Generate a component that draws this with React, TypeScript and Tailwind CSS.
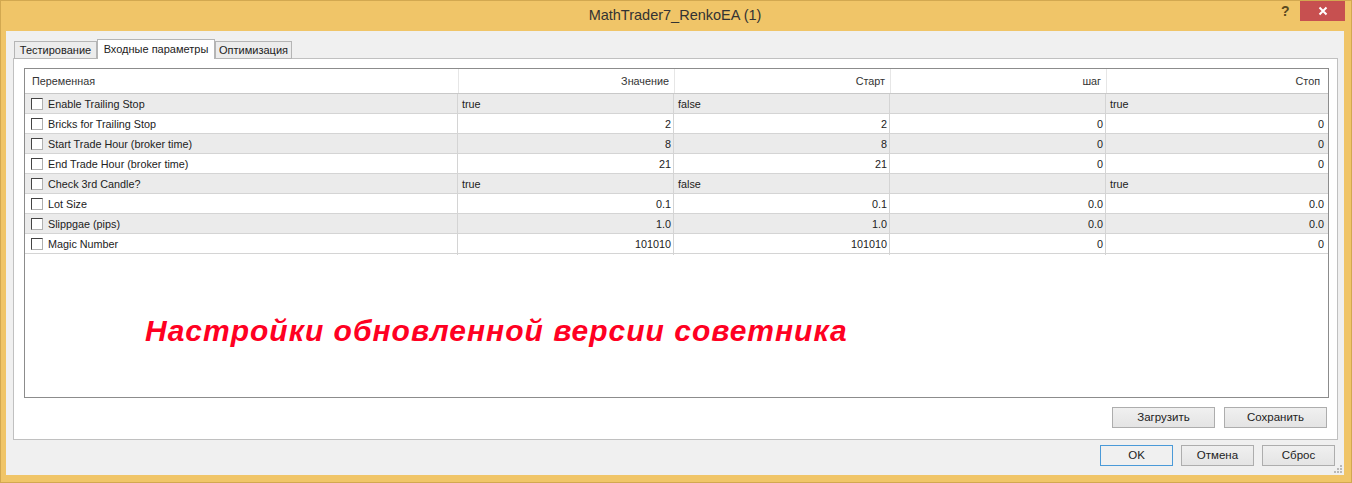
import React from "react";

const rows: [string, string, string, string, string][] = [
  ["Enable Trailing Stop", "true", "false", "", "true"],
  ["Bricks for Trailing Stop", "2", "2", "0", "0"],
  ["Start Trade Hour (broker time)", "8", "8", "0", "0"],
  ["End Trade Hour (broker time)", "21", "21", "0", "0"],
  ["Check 3rd Candle?", "true", "false", "", "true"],
  ["Lot Size", "0.1", "0.1", "0.0", "0.0"],
  ["Slippgae (pips)", "1.0", "1.0", "0.0", "0.0"],
  ["Magic Number", "101010", "101010", "0", "0"],
];
const headGrid = "grid grid-cols-[433px_216px_216px_216px_222px]";
const rowGrid = "grid grid-cols-[432px_216px_216px_216px_221px]";

function Cell({ v }: { v: string }) {
  const isText = v === "true" || v === "false";
  return (
    <div className={`border-l border-[#d4d4d4] h-full leading-[21px] ${isText ? "pl-[4px] text-left" : "pr-[2px] text-right"}`}>{v}</div>
  );
}

function Btn({ children, w, primary }: { children: React.ReactNode; w: string; primary?: boolean }) {
  return (
    <div className={`${w} h-[21px] flex items-center justify-center text-[11.5px] text-[#222] ${primary ? "border border-[#4a9ad8] bg-[#f0f0f0]" : "border border-[#adadad] bg-gradient-to-b from-[#f0f0f0] to-[#e4e4e4]"}`}>
      {children}
    </div>
  );
}

export default function App() {
  return (
    <div className="w-[1352px] h-[483px] overflow-hidden bg-[#f0c568] border border-[#d2a850] flex flex-col text-[10.8px] text-[#222]" style={{ fontFamily: '"Liberation Sans", Arial, sans-serif' }}>
      <div className="h-[30px] shrink-0 flex items-start relative">
        <div className="flex-1 text-center text-[14.5px] leading-[29px] text-[#333] pr-[2px]">MathTrader7_RenkoEA (1)</div>
        <div className="absolute left-[1280px] top-0 text-[14px] font-bold leading-[20px] text-[#5a4a20]">?</div>
        <div className="absolute left-[1299px] top-0 w-[45px] h-[20px] bg-[#c75050] flex items-center justify-center">
          <svg width="10" height="10" viewBox="0 0 10 10"><path d="M1.5 1.5 L8.5 8.5 M8.5 1.5 L1.5 8.5" stroke="#fff" strokeWidth="2" /></svg>
        </div>
      </div>
      <div className="ml-[5px] mr-[7px] h-[444px] shrink-0 bg-[#f0f0f0] flex flex-col pt-[8px] relative">
        <div className="flex items-end h-[19px] pl-[8px] shrink-0 relative z-10 text-[11px]">
          <div className="h-[18px] w-[83px] border border-[#b5b5b5] bg-[#ececec] flex items-center justify-center mb-[-1px]">Тестирование</div>
          <div className="h-[20px] w-[118px] border border-[#b5b5b5] border-b-0 bg-white flex items-center justify-center pb-[1px] mb-[-1px]">Входные параметры</div>
          <div className="h-[18px] w-[77px] border border-[#b5b5b5] bg-[#ececec] flex items-center justify-center mb-[-1px]">Оптимизация</div>
        </div>
        <div className="ml-[7px] mr-[6px] h-[382px] shrink-0 bg-white border border-[#c0c0c0] pl-[10px] pr-[8px] pt-[9px] flex flex-col">
          <div className="h-[330px] shrink-0 border border-[#8c8c8c] bg-white flex flex-col">
            <div className={`${headGrid} h-[25px] shrink-0 border-b border-[#c8c8c8] leading-[24px] text-[#333]`}>
              <div className="pl-[7px]">Переменная</div>
              <div className="border-l border-[#e6e6e6] pr-[5px] text-right">Значение</div>
              <div className="border-l border-[#e6e6e6] pr-[5px] text-right">Старт</div>
              <div className="border-l border-[#e6e6e6] pr-[5px] text-right">шаг</div>
              <div className="border-l border-[#e6e6e6] pr-[8px] text-right">Стоп</div>
            </div>
            {rows.map((r, i) => (
              <div key={r[0]} className={`${rowGrid} h-[20px] shrink-0 border-b border-[#d4d4d4] ${i % 2 === 0 ? "bg-[#ebebeb]" : "bg-white"}`}>
                <div className="flex items-center pl-[6px]">
                  <div className="w-[12px] h-[12px] mb-[1px] bg-white border border-[#b0b0b0] border-l-[#444] border-t-[#444] shrink-0" />
                  <span className="ml-[5px] leading-[21px]">{r[0]}</span>
                </div>
                <Cell v={r[1]} />
                <Cell v={r[2]} />
                <Cell v={r[3]} />
                <Cell v={r[4]} />
              </div>
            ))}
            <div className="pl-[120px] pt-[57px] text-[30px] leading-[40px] font-bold italic text-[#ff0022] tracking-[1px]">
              Настройки обновленной версии советника
            </div>
          </div>
          <div className="flex justify-end gap-[9px] mt-[9px] pr-[2px]">
            <Btn w="w-[103px]">Загрузить</Btn>
            <Btn w="w-[103px]">Сохранить</Btn>
          </div>
        </div>
        <div className="flex justify-end gap-[8px] pr-[9px] mt-[5px]">
          <Btn w="w-[73px]" primary>OK</Btn>
          <Btn w="w-[73px]">Отмена</Btn>
          <Btn w="w-[73px]">Сброс</Btn>
        </div>
        <svg className="absolute right-[1px] bottom-[1px]" width="9" height="9" viewBox="0 0 9 9" fill="#b8b8b8">
          <rect x="6" y="0" width="2" height="2" />
          <rect x="3" y="3" width="2" height="2" />
          <rect x="6" y="3" width="2" height="2" />
          <rect x="0" y="6" width="2" height="2" />
          <rect x="3" y="6" width="2" height="2" />
          <rect x="6" y="6" width="2" height="2" />
        </svg>
      </div>
    </div>
  );
}
